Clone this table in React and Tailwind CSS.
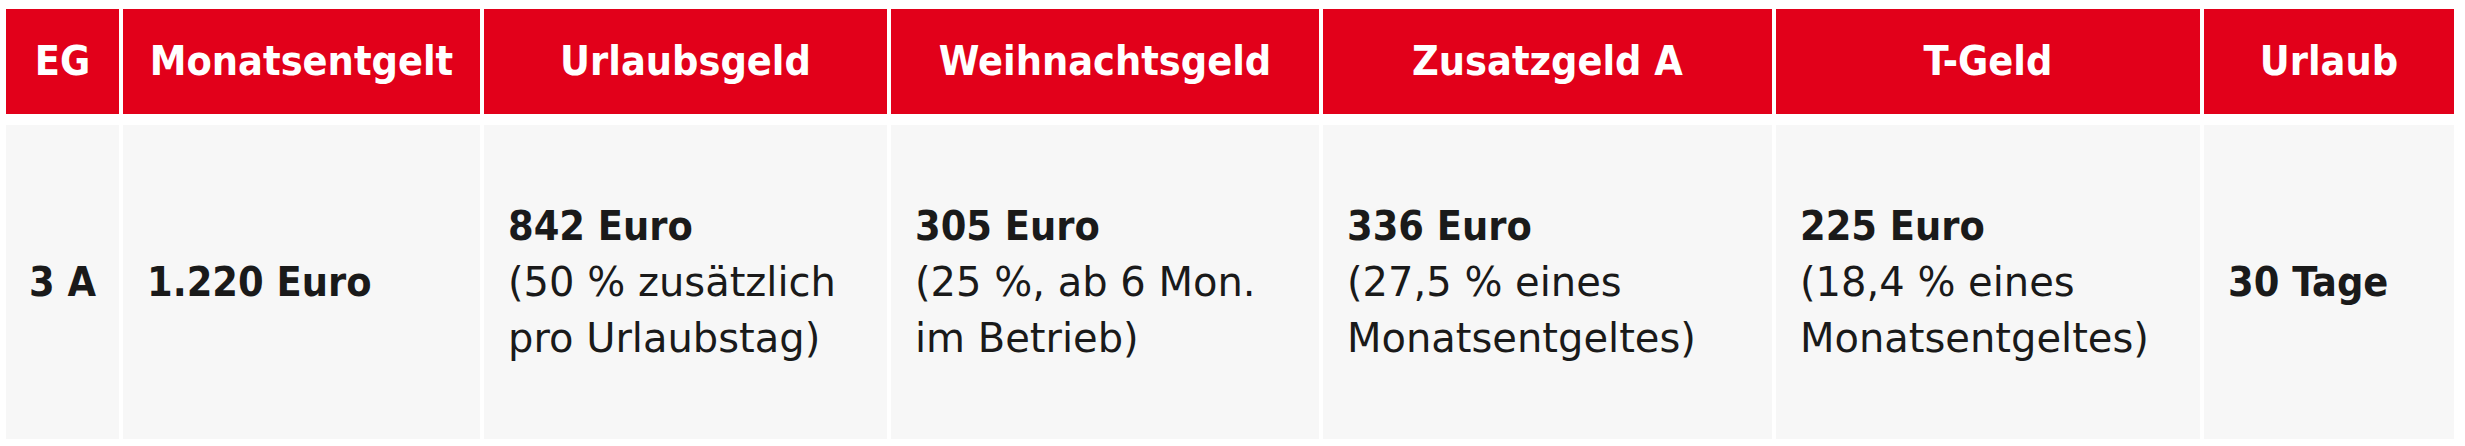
const columns = [
  { title: 'EG', value: '3 A' },
  { title: 'Monatsentgelt', value: '1.220 Euro' },
  { title: 'Urlaubsgeld', value: '842 Euro', note: ['(50 % zusätzlich', 'pro Urlaubstag)'] },
  { title: 'Weihnachtsgeld', value: '305 Euro', note: ['(25 %, ab 6 Mon.', 'im Betrieb)'] },
  { title: 'Zusatzgeld A', value: '336 Euro', note: ['(27,5 % eines', 'Monatsentgeltes)'] },
  { title: 'T-Geld', value: '225 Euro', note: ['(18,4 % eines', 'Monatsentgeltes)'] },
  { title: 'Urlaub', value: '30 Tage' },
]

const bold = "font-['DejaVu_Sans_Condensed','DejaVu_Sans',sans-serif] font-bold font-stretch-condensed"

export default function App() {
  return (
    <div className="w-[2465px] h-[446px] bg-white pt-[9px] pl-[6px]">
      <div className="grid grid-cols-[113px_357px_403px_428px_449px_424px_250px] grid-rows-[105px_314px] gap-x-[4px] gap-y-[11px]">
        {columns.map(col => (
          <div
            key={col.title}
            className={`flex items-center justify-center bg-[#e2001a] text-white text-[41px] leading-none whitespace-nowrap ${bold}`}
          >
            {col.title}
          </div>
        ))}
        {columns.map((col, i) => (
          <div
            key={col.title + '-v'}
            className={`flex flex-col justify-center bg-[#f7f7f7] text-[#1a1a1a] ${i === 0 ? 'px-[23px]' : 'px-6'}`}
          >
            <div className={`text-[41px] leading-[56px] whitespace-nowrap ${bold}`}>{col.value}</div>
            {col.note?.map(line => (
              <div key={line} className="font-['DejaVu_Sans',sans-serif] text-[40px] leading-[56px] whitespace-nowrap">
                {line}
              </div>
            ))}
          </div>
        ))}
      </div>
    </div>
  )
}
